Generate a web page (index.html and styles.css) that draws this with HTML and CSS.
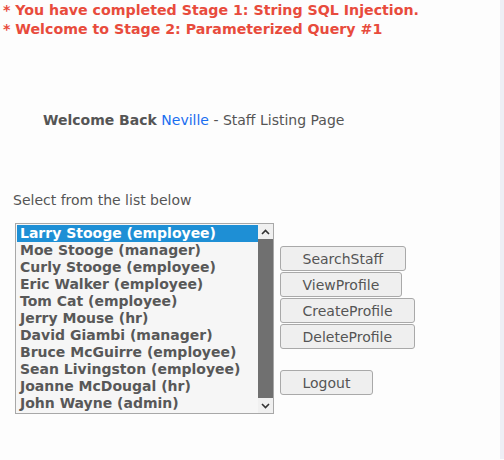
FILE: index.html
```html
<!DOCTYPE html>
<html>
<head>
<meta charset="utf-8">
<link rel="stylesheet" href="styles.css">
</head>
<body>
<div class="page">
  <div class="messages">
    <div>* You have completed Stage 1: String SQL Injection.</div>
    <div>* Welcome to Stage 2: Parameterized Query #1</div>
  </div>
  <p class="welcome"><b>Welcome Back</b> <span class="user">Neville</span> - Staff Listing Page</p>
  <p class="label">Select from the list below</p>
  <div class="row">
    <div class="listbox">
      <ul class="options">
        <li class="selected">Larry Stooge (employee)</li>
        <li>Moe Stooge (manager)</li>
        <li>Curly Stooge (employee)</li>
        <li>Eric Walker (employee)</li>
        <li>Tom Cat (employee)</li>
        <li>Jerry Mouse (hr)</li>
        <li>David Giambi (manager)</li>
        <li>Bruce McGuirre (employee)</li>
        <li>Sean Livingston (employee)</li>
        <li>Joanne McDougal (hr)</li>
        <li>John Wayne (admin)</li>
      </ul>
      <div class="scrollbar">
        <div class="arrow"><svg width="9" height="6" viewBox="0 0 9 6"><polyline points="1,5 4.5,1.5 8,5" fill="none" stroke="#333" stroke-width="1.6"/></svg></div>
        <div class="thumb"></div>
        <div class="arrow"><svg width="9" height="6" viewBox="0 0 9 6"><polyline points="1,1 4.5,4.5 8,1" fill="none" stroke="#333" stroke-width="1.6"/></svg></div>
      </div>
    </div>
    <div class="buttons">
      <button>SearchStaff</button>
      <button>ViewProfile</button>
      <button>CreateProfile</button>
      <button>DeleteProfile</button>
      <button class="logout">Logout</button>
    </div>
  </div>
</div>
<div class="edge"></div>
</body>
</html>
```
FILE: styles.css
```css
html, body {
  margin: 0;
  padding: 0;
  background: #fdfdfd;
}
body {
  font-family: "DejaVu Sans", "Liberation Sans", sans-serif;
  font-size: 14px;
  color: #555;
  display: flex;
  height: 460px;
  overflow: hidden;
}
.page {
  flex: 1;
}
.edge {
  width: 4px;
  height: 459px;
  background: #eeeef5;
}
.messages {
  color: #e84b3c;
  font-weight: bold;
  font-size: 14.2px;
  line-height: 19px;
  padding: 1px 0 0 3px;
}
.welcome {
  margin: 73px 0 0 43px;
  line-height: 17px;
}
.user {
  color: #1a6ef0;
}
.label {
  margin: 63px 0 0 13px;
  line-height: 17px;
}
.row {
  display: flex;
  align-items: center;
  margin: 14px 0 0 15px;
  gap: 6px;
}
.listbox {
  display: flex;
  width: 257px;
  height: 189px;
  border: 1px solid #a8a8a8;
  background: #f6f6f6;
}
.options {
  list-style: none;
  margin: 0;
  padding: 1px 0 0 1px;
  flex: 1;
  font-weight: bold;
  color: #585858;
}
.options li {
  height: 17px;
  line-height: 17px;
  padding-left: 3px;
  white-space: nowrap;
}
.options li.selected {
  background: #1e8fd5;
  color: #fff;
}
.scrollbar {
  width: 15px;
  display: flex;
  flex-direction: column;
  background: #f0f0f0;
}
.arrow {
  height: 15px;
  display: flex;
  align-items: center;
  justify-content: center;
}
.thumb {
  flex: 1;
  background: #707070;
}
.buttons {
  display: flex;
  flex-direction: column;
  align-items: flex-start;
  gap: 1px;
  padding-top: 4px;
}
.buttons button {
  font-family: "DejaVu Sans", "Liberation Sans", sans-serif;
  font-size: 14px;
  color: #555;
  background: #efefef;
  border: 1px solid #a9a9a9;
  border-radius: 3px;
  height: 25px;
  padding: 0 21.5px;
}
.buttons .logout {
  margin-top: 20px;
}
```
